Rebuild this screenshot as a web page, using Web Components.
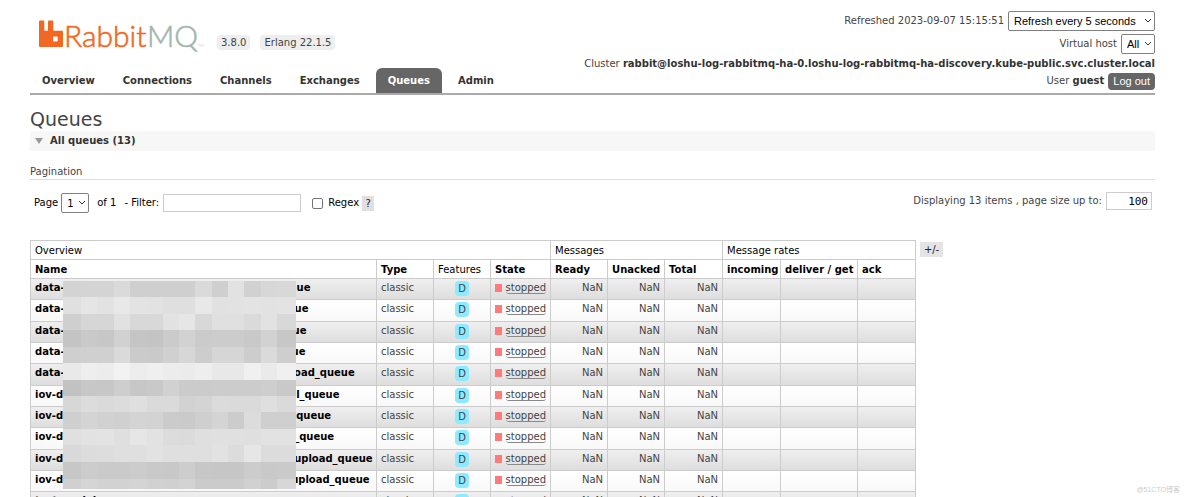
<!DOCTYPE html>
<html lang="en">
<head>
<meta charset="utf-8">
<title>RabbitMQ Management</title>
<style>
  body { margin: 0; background: #fff; color: #444; font: 10px/16px Verdana, "DejaVu Sans", sans-serif; }
</style>
</head>
<body>
<rmq-app></rmq-app>
<script>
const define = (name, html, setup) => customElements.define(name, class extends HTMLElement {
  constructor() {
    super();
    const t = document.createElement('template');
    t.innerHTML = html;
    this.attachShadow({ mode: 'open' }).append(t.content.cloneNode(true));
  }
  connectedCallback() { if (setup) setup(this, this.shadowRoot); }
});

const selectCss = `
  select { appearance: none; box-sizing: border-box; height: 20px; margin: 0; padding: 0 12px 0 5px; border: 1px solid #808080; border-radius: 2px;
    color: #000; font: 11px "Liberation Sans", Arial, sans-serif;
    background: #fff url("data:image/svg+xml,%3Csvg xmlns='http://www.w3.org/2000/svg' width='8' height='6'%3E%3Cpath d='M1 1l3 3 3-3' fill='none' stroke='%23333'/%3E%3C/svg%3E") no-repeat right 2px center; }`;

define('rmq-logo', `
<style>
  :host { display: block; }
  a { display: flex; text-decoration: none; }
  svg { display: block; }
  text { font-family: Lato, sans-serif; font-weight: 300; font-size: 30px; stroke-width: .6; }
  text.tm { font-size: 4px; }
</style>
<a href="#" aria-label="RabbitMQ">
  <svg width="166" height="36" viewBox="0 0 166 36">
    <path fill="#f26822" fill-rule="evenodd" d="M1 3.500q0-1 1-1h3.300q1 0 1 1v9.200h3.700v-9.200q0-1 1-1h3.300q1 0 1 1v9.200h8.700q1 0 1 1v14.300q0 1-1 1h-22q-1 0-1-1zM15 19.200v3.600q0 .7.700.7h3.300q.7 0 .7-.7v-3.600q0-.7-.7-.7h-3.300q-.7 0-.7.7z"/>
    <text x="26" y="29" fill="#f26822" stroke="#f26822">Rabbit</text>
    <text x="109" y="29" fill="#a2b5ae" stroke="#a2b5ae">MQ</text>
    <text class="tm" x="160" y="29" fill="#bbb">TM</text>
  </svg>
</a>`);

define('rmq-tag', `
<style>
  :host { display: block; margin-bottom: 4px; padding: 0 4px; border-radius: 4px; background: #eee; line-height: 15px; }
</style><slot></slot>`);

define('rmq-tab', `
<style>
  :host { display: block; }
  a { display: block; padding: 0 12px; border-radius: 6px 6px 0 0; color: #333; font-weight: bold; line-height: 25px; text-decoration: none; }
  :host([selected]) a { background: #666; color: #fff; }
</style><a href="#"><slot></slot></a>`);

define('rmq-status', `
<style>${selectCss}
  :host { display: flex; flex-direction: column; align-items: flex-end; padding: 11px 0 3px; }
  div { display: flex; align-items: center; gap: 4px; margin-bottom: 3px; height: 20px; white-space: nowrap; }
  div.short { height: 16px; margin-bottom: 1px; }
  div.vhost { margin-bottom: 2px; }
  label { display: flex; align-items: center; gap: 4px; }
  b { color: #333; }
  #every { width: 147px; }
  #vhost { width: 34px; }
  button { height: 17px; padding: 0 5px; border: 0; border-radius: 4px; background: #666; color: #fff; font: 11px "Liberation Sans", Arial, sans-serif; }
</style>
<div><label for="every">Refreshed 2023-09-07 15:15:51</label><select id="every"><option>Refresh every 5 seconds</option></select></div>
<div class="vhost"><label for="vhost">Virtual host</label><select id="vhost"><option>All</option></select></div>
<div class="short"><span>Cluster <b>rabbit@loshu-log-rabbitmq-ha-0.loshu-log-rabbitmq-ha-discovery.kube-public.svc.cluster.local</b></span></div>
<div class="short"><span>User <b>guest</b></span><button type="button">Log out</button></div>`);

define('rmq-header', `
<style>
  :host { display: flex; justify-content: space-between; border-bottom: 2px solid #aaa; }
  .left { display: flex; flex-direction: column; justify-content: space-between; }
  .brand { display: flex; align-items: flex-end; padding: 18px 0 0 8px; gap: 10px; }
  rmq-logo { margin-right: 3px; }
  nav { display: flex; gap: 4px; }
</style>
<div class="left">
  <div class="brand"><rmq-logo></rmq-logo><rmq-tag>3.8.0</rmq-tag><rmq-tag>Erlang 22.1.5</rmq-tag></div>
  <nav><rmq-tab>Overview</rmq-tab><rmq-tab>Connections</rmq-tab><rmq-tab>Channels</rmq-tab><rmq-tab>Exchanges</rmq-tab><rmq-tab selected>Queues</rmq-tab><rmq-tab>Admin</rmq-tab></nav>
</div>
<rmq-status></rmq-status>`);

define('rmq-section', `
<style>
  :host { display: block; }
  h2 { display: flex; align-items: center; gap: 7px; margin: 0; padding: 0 5px; background: #f7f7f7; color: #333; font-size: 10px; line-height: 20px; }
</style>
<h2><svg width="8" height="6"><path d="M0 0h8l-4 6z" fill="#999"/></svg><span><slot name="title"></slot></span></h2>
<slot></slot>`);

define('rmq-pagination', `
<style>${selectCss}
  :host { display: block; }
  h3 { margin: 13px 0 12px; border-bottom: 1px solid #ddd; font-size: 10px; font-weight: normal; line-height: 15px; }
  form { display: flex; align-items: flex-start; justify-content: space-between; padding: 0 3px 0 4px; }
  .filter, .size { display: flex; align-items: center; color: #000; }
  .filter { padding-top: 1px; }
  .size { color: #444; gap: 4px; }
  #page { width: 28px; margin: 0 8px 0 3px; font-family: "DejaVu Sans", sans-serif; font-size: 10px; }
  input { box-sizing: border-box; margin: 0; border: 1px solid #ccc; background: #fff; }
  #filter { width: 138px; height: 18px; margin: 0 11px 0 4px; }
  #filter-label { margin-left: 8px; }
  #regex { appearance: none; width: 11px; height: 11px; margin-right: 5px; border-color: #767676; border-radius: 2px; }
  #size { width: 46px; height: 18px; padding: 0 3px; text-align: right; font: 11px "DejaVu Sans Mono", monospace; }
  button { width: 12px; height: 15px; margin-left: 3px; padding: 0; border: 0; background: #e0e0e0; color: #222; font: 10px "DejaVu Sans", sans-serif; }
</style>
<h3>Pagination</h3>
<form>
  <div class="filter">
    <label for="page">Page</label><select id="page"><option>1</option></select><span>of 1</span>
    <label id="filter-label" for="filter">- Filter:</label><input id="filter" type="text">
    <input id="regex" type="checkbox"><label for="regex">Regex</label><button type="button">?</button>
  </div>
  <div class="size"><label for="size">Displaying 13 items , page size up to:</label><input id="size" type="text" value="100"></div>
</form>`);

/* Grid of grey blocks that hides part of the queue names. */
const mosaic = [
  'd3 d4 d4 da cf cf cf cf da cf e2 d1 d7 d8', 'e0 e5 e2 e8 e3 e2 df df e8 e1 e2 e3 e2 e3',
  'cf d6 d6 e1 d8 d8 e2 e6 d8 e0 e0 da e2 d8', 'c4 c9 c7 d1 c5 c4 cb d2 cb cc cc c9 d2 c7',
  'cf d0 d0 da cb ca d0 d7 cd d6 d6 cd da ce', 'e9 ee ec f2 ed ef ec eb ee e8 e8 f0 ea f0',
  'c2 c7 c7 ce c7 c9 d1 cb cb cc cc cc ce c9', 'd7 dc da dc df da da d2 d4 db da da df da',
  'cf d4 d1 d0 d4 d3 cb ca cf d4 cc dc cf cf', 'e0 e2 e3 df e6 e2 dc db df e0 e0 df e2 e2',
  'd9 dc dd df df e2 df df df e2 dc e6 dc dc', 'c7 cc ca ca cc c9 c8 cd c7 c6 c6 cc c9 ca',
  'd0 d5 d2 d2 d4 d1 d0 d3 cb cb cb d1 cc d7'].map(r => r.split(' '));
define('rmq-mosaic', `
<style>:host { display: block; } svg { display: block; }</style>
<svg width="233" height="210" viewBox="0 0 233 210"><rect width="233" height="210" fill="#eee"/></svg>`, (host, root) => {
  const svg = root.querySelector('svg');
  const xs = [0, 18, 34, 51, 67, 84, 100, 116, 132, 149, 165, 181, 198, 214, 233];
  const ys = [2, 18, 35, 51, 68, 84, 101, 117, 133, 150, 166, 183, 200, 210];
  mosaic.forEach((row, j) => row.forEach((c, i) => {
    const r = document.createElementNS('http://www.w3.org/2000/svg', 'rect');
    r.setAttribute('x', xs[i]); r.setAttribute('y', ys[j]);
    r.setAttribute('width', xs[i + 1] - xs[i]); r.setAttribute('height', ys[j + 1] - ys[j]);
    r.setAttribute('fill', '#' + c + c + c);
    svg.append(r);
  }));
});

/* Queue name: visible start, hidden width, visible end. */
const queues = [
  ['data-', 232, 'ue'], ['data-', 230, 'ue'], ['data-', 228, 'ue'], ['data-', 227, 'ue'], ['data-', 226, 'load_queue'],
  ['iov-d', 233, 'l_queue'], ['iov-d', 233, 'queue'], ['iov-d', 231, '_queue'], ['iov-d', 231, 'upload_queue'], ['iov-d', 228, 'upload_queue'],
  ['test-model', 0, '']];
define('rmq-queues', `
<style>
  :host { display: flex; align-items: flex-start; gap: 4px; margin-top: 27px; }
  .wrap { position: relative; }
  rmq-mosaic { position: absolute; left: 33px; top: 39px; }
  table { border-collapse: collapse; table-layout: fixed; width: 886px; }
  th, td { box-sizing: border-box; padding: 1px 4px 0; border: 1px solid #ccc; text-align: left; vertical-align: top; white-space: nowrap; overflow: hidden; }
  th { height: 19px; color: #000; line-height: 17px; }
  th.plain { font-weight: normal; }
  tbody th, td { height: 21px; line-height: 16px; }
  tbody tr:nth-child(3n+2) > * { height: 22px; }
  tbody tr { background: linear-gradient(#fff, #f8f8f8); }
  tbody tr:nth-child(odd) { background: linear-gradient(#efefef, #ddd); }
  .num { text-align: right; }
  td.feat { text-align: center; padding-top: 2px; }
  .feat abbr { display: block; width: 14px; margin: 0 auto; border-radius: 4px; background: #8eeaff; line-height: 15px; text-decoration: none; }
  .gap { display: inline-block; }
  .state { display: flex; align-items: center; gap: 4px; height: 16px; }
  .state i { width: 8px; height: 8px; background: #ff7a7a; }
  .state abbr { border-bottom: 1px solid #888; border-radius: 3px; line-height: 11px; text-decoration: none; }
  button { width: 23px; height: 15px; margin-top: 2px; padding: 0; border: 0; background: #e4e4e4; color: #222; font: 10px "DejaVu Sans", sans-serif; }
</style>
<div class="wrap">
<table>
  <colgroup><col style="width:346px"><col style="width:57px"><col style="width:57px"><col style="width:60px"><col style="width:57px"><col style="width:57px"><col style="width:58px"><col style="width:58px"><col style="width:77px"><col style="width:58px"></colgroup>
  <thead>
    <tr><th class="plain" colspan="4">Overview</th><th class="plain" colspan="3">Messages</th><th class="plain" colspan="3">Message rates</th></tr>
    <tr><th>Name</th><th>Type</th><th class="plain">Features</th><th>State</th><th>Ready</th><th>Unacked</th><th>Total</th><th>incoming</th><th>deliver / get</th><th>ack</th></tr>
  </thead>
  <tbody></tbody>
</table>
<rmq-mosaic></rmq-mosaic>
</div>
<button type="button">+/-</button>`, (host, root) => {
  root.querySelector('tbody').innerHTML = queues.map(([a, w, b]) => `<tr><th scope="row">${a}<span class="gap" style="width:${w}px"></span>${b}</th><td>classic</td><td class="feat"><abbr>D</abbr></td><td><div class="state"><i></i><abbr>stopped</abbr></div></td><td class="num">NaN</td><td class="num">NaN</td><td class="num">NaN</td><td></td><td></td><td></td></tr>`).join('');
});

define('rmq-app', `
<style>
  :host { display: block; position: relative; box-sizing: border-box; height: 100vh; padding: 0 29px 0 30px; overflow: hidden; }
  h1 { margin: 13px 0 0; color: #444; font-size: 19px; font-weight: normal; line-height: 23px; }
  .mark { position: absolute; right: 4px; bottom: 1px; color: #ccc; font: 7px/12px "Liberation Sans", "Noto Sans CJK SC", sans-serif; }
</style>
<rmq-header></rmq-header>
<main>
  <h1>Queues</h1>
  <rmq-section><span slot="title">All queues (13)</span>
    <rmq-pagination></rmq-pagination>
    <rmq-queues></rmq-queues>
  </rmq-section>
</main>
<div class="mark">@51CTO博客</div>`);
</script>
</body>
</html>
